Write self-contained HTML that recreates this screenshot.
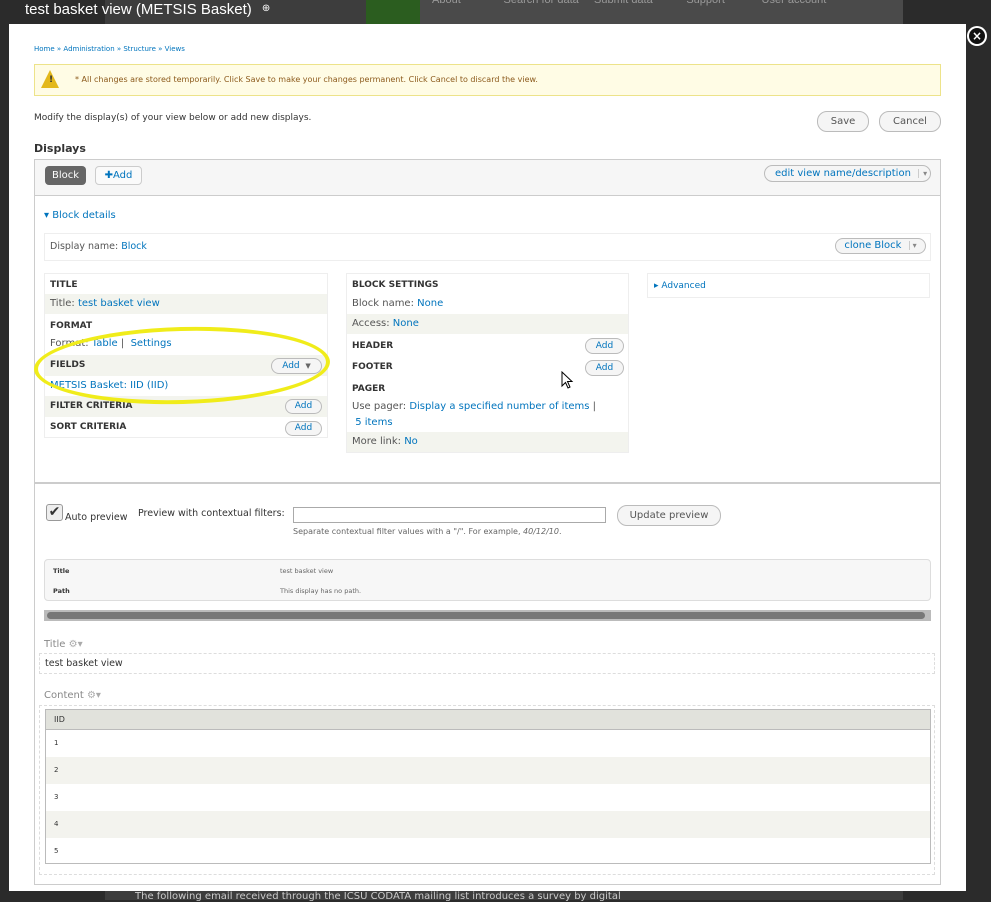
<!DOCTYPE html>
<html><head><style>
*{margin:0;padding:0;box-sizing:border-box}
body{width:991px;height:900px;background:#2b2b2b;position:relative;overflow:hidden;font-family:"DejaVu Sans","Liberation Sans",sans-serif;font-size:10px;color:#333}
.a{position:absolute}
a,.l{color:#0074bd;text-decoration:none}
.btn{position:absolute;border:1px solid #bbb;border-radius:10px;background:#f5f5f5;color:#0074bd;font-size:9px;text-align:center}
.hd{font-size:9px;font-weight:bold;color:#333}
.row{position:absolute;left:0;right:0;padding-left:5px}
.g{background:#f3f4ee}
</style></head><body>
<div class="a" style="left:105px;top:0;width:798px;height:900px;background:#3d3d3d"></div>
<div class="a" style="left:366px;top:0;width:537px;height:24px;background:#4a4a4a"></div>
<div class="a" style="left:366px;top:0;width:54px;height:24px;background:#2b5d1f"></div>
<div class="a" style="left:432px;top:-6px;color:#999;font-size:11px;font-family:'Liberation Sans',sans-serif">About &nbsp;&nbsp;&nbsp;&nbsp;&nbsp;&nbsp;&nbsp;&nbsp;&nbsp;&nbsp;&nbsp;&nbsp; Search for data &nbsp;&nbsp;&nbsp; Submit data &nbsp;&nbsp;&nbsp;&nbsp;&nbsp;&nbsp;&nbsp;&nbsp;&nbsp; Support &nbsp;&nbsp;&nbsp;&nbsp;&nbsp;&nbsp;&nbsp;&nbsp;&nbsp;&nbsp; User account</div>
<div class="a" style="left:25px;top:1px;color:#fff;font-size:15px;font-family:'Liberation Sans',sans-serif">test basket view (METSIS Basket) <span style="font-size:10px;position:relative;top:-3px;margin-left:6px">⊕</span></div>
<div class="a" style="left:9px;top:24px;width:957px;height:867px;background:#fff"></div>
<div class="a" style="left:967px;top:26px;width:20px;height:20px;border-radius:50%;background:#fff;text-align:center"><div style="margin:2px;width:16px;height:16px;border-radius:50%;background:#111;color:#fff;font-size:12px;line-height:16px;font-weight:bold">×</div></div>
<div class="a l" style="left:34px;top:45px;font-size:7px">Home » Administration » Structure » Views</div>
<div class="a" style="left:34px;top:64px;width:907px;height:32px;background:#fffce5;border:1px solid #ede38a"></div>
<div class="a" style="left:41px;top:70px;width:0;height:0;border-left:9px solid transparent;border-right:9px solid transparent;border-bottom:18px solid #e3b81c"></div>
<div class="a" style="left:49px;top:75px;font-size:9px;font-weight:bold">!</div>
<div class="a" style="left:75px;top:75px;font-size:8px;color:#8c5a1c">* All changes are stored temporarily. Click Save to make your changes permanent. Click Cancel to discard the view.</div>
<div class="a" style="left:34px;top:113px;font-size:9px">Modify the display(s) of your view below or add new displays.</div>
<div class="btn" style="left:817px;top:111px;width:52px;height:21px;color:#555;line-height:19px;font-size:10px">Save</div>
<div class="btn" style="left:879px;top:111px;width:62px;height:21px;color:#555;line-height:19px;font-size:10px">Cancel</div>
<div class="a" style="left:34px;top:142px;font-size:11px;font-weight:bold">Displays</div>
<div class="a" style="left:34px;top:159px;width:907px;height:726px;border:1px solid #ccc"></div>
<div class="a" style="left:35px;top:160px;width:905px;height:36px;background:#f6f6f6;border-bottom:1px solid #ccc"></div>
<div class="a" style="left:45px;top:166px;width:41px;height:19px;background:#666;color:#fff;border-radius:4px;text-align:center;line-height:19px;font-size:10px">Block</div>
<div class="a" style="left:95px;top:166px;width:47px;height:19px;border:1px solid #ccc;border-radius:4px;background:#fafafa;color:#0074bd;text-align:center;line-height:17px;font-size:10px">✚Add</div>
<div class="btn" style="left:764px;top:165px;width:167px;height:17px;line-height:15px;font-size:10px;text-align:left;padding-left:10px">edit view name/description <span style="color:#888;border-left:1px solid #ccc;padding-left:4px;margin-left:4px;font-size:8px">▾</span></div>
<div class="a l" style="left:44px;top:210px;font-size:10px">▾ Block details</div>
<div class="a" style="left:44px;top:233px;width:887px;height:28px;border:1px solid #eee"></div>
<div class="a" style="left:50px;top:241px;font-size:9.5px;color:#555">Display name: <a>Block</a></div>
<div class="btn" style="left:835px;top:238px;width:91px;height:16px;line-height:14px;font-size:10px">clone Block <span style="color:#888;border-left:1px solid #ccc;padding-left:3px;margin-left:4px;font-size:8px">▾</span></div>
<div class="a" style="left:44px;top:273px;width:284px;height:165px;border:1px solid #eee">
 <div class="row hd" style="top:6px">TITLE</div>
 <div class="row g" style="top:20px;height:20px;line-height:20px;color:#555">Title: <a>test basket view</a></div>
 <div class="row hd" style="top:47px">FORMAT</div>
 <div class="row" style="top:60px;height:20px;line-height:20px;color:#555">Format: <a>Table</a> | &nbsp;<a>Settings</a></div>
 <div class="row hd g" style="top:81px;height:21px;line-height:21px">FIELDS</div>
 <div class="btn" style="left:226px;top:84px;width:51px;height:16px;line-height:14px">Add &nbsp;<span style="color:#666;font-size:7px">▼</span></div>
 <div class="row" style="top:102px;height:20px;line-height:20px"><a>METSIS Basket: IID (IID)</a></div>
 <div class="row hd g" style="top:122px;height:21px;line-height:21px">FILTER CRITERIA</div>
 <div class="btn" style="left:240px;top:125px;width:37px;height:15px;line-height:13px">Add</div>
 <div class="row hd" style="top:143px;height:21px;line-height:21px">SORT CRITERIA</div>
 <div class="btn" style="left:240px;top:147px;width:37px;height:15px;line-height:13px">Add</div>
</div>
<div class="a" style="left:346px;top:273px;width:283px;height:180px;border:1px solid #eee">
 <div class="row hd" style="top:6px">BLOCK SETTINGS</div>
 <div class="row" style="top:20px;height:20px;line-height:20px;color:#555">Block name: <a>None</a></div>
 <div class="row g" style="top:40px;height:20px;line-height:20px;color:#555">Access: <a>None</a></div>
 <div class="row hd" style="top:62px;height:20px;line-height:20px">HEADER</div>
 <div class="btn" style="left:238px;top:64px;width:39px;height:16px;line-height:14px">Add</div>
 <div class="row hd" style="top:83px;height:20px;line-height:20px">FOOTER</div>
 <div class="btn" style="left:238px;top:86px;width:39px;height:16px;line-height:14px">Add</div>
 <div class="row hd" style="top:105px;height:20px;line-height:20px">PAGER</div>
 <div class="row" style="top:127px;color:#555">Use pager: <a>Display a specified number of items</a> |</div>
 <div class="row" style="top:143px;color:#555">&nbsp;<a>5 items</a></div>
 <div class="row g" style="top:158px;height:20px;line-height:20px;color:#555">More link: <a>No</a></div>
</div>
<div class="a" style="left:647px;top:273px;width:283px;height:25px;border:1px solid #eee;line-height:24px;padding-left:6px;font-size:9px" ><a>▸ Advanced</a></div>
<div class="a" style="left:34px;top:327px;width:296px;height:77px;border:4px solid #f0ec1a;border-radius:50%;transform:rotate(-1.5deg)"></div>
<svg class="a" style="left:561px;top:371px" width="14" height="20"><path d="M1 1 L1 15 L4.5 11.5 L7 17 L9 16 L6.5 10.5 L11 10.5 Z" fill="#fff" stroke="#000"/></svg>
<div class="a" style="left:35px;top:482px;width:905px;height:2px;background:#ccc"></div>
<div class="a" style="left:46px;top:504px;width:17px;height:17px;border:1px solid #999;border-radius:3px;background:#eee;font-size:14px;line-height:15px;text-align:center">✔</div>
<div class="a" style="left:65px;top:512px;font-size:9.5px">Auto preview</div>
<div class="a" style="left:138px;top:508px;font-size:9.5px">Preview with contextual filters:</div>
<div class="a" style="left:293px;top:507px;width:313px;height:16px;border:1px solid #aaa"></div>
<div class="a" style="left:293px;top:527px;font-size:8px;color:#666">Separate contextual filter values with a "/". For example, <i>40/12/10</i>.</div>
<div class="btn" style="left:617px;top:505px;width:104px;height:21px;line-height:19px;color:#555;font-size:10px">Update preview</div>
<div class="a" style="left:44px;top:559px;width:887px;height:42px;border:1px solid #ddd;border-radius:4px;background:#f7f7f7"></div>
<div class="a" style="left:53px;top:567px;font-size:6.5px;font-weight:bold">Title</div>
<div class="a" style="left:280px;top:567px;font-size:6.5px;color:#666">test basket view</div>
<div class="a" style="left:53px;top:587px;font-size:6.5px;font-weight:bold">Path</div>
<div class="a" style="left:280px;top:587px;font-size:6.5px;color:#666">This display has no path.</div>
<div class="a" style="left:44px;top:610px;width:887px;height:11px;background:#bbb"></div>
<div class="a" style="left:47px;top:612px;width:878px;height:7px;background:#777;border-radius:4px"></div>
<div class="a" style="left:44px;top:639px;font-size:10px;color:#888">Title <span style="color:#aaa">⚙▾</span></div>
<div class="a" style="left:39px;top:653px;width:896px;height:21px;border:1px dashed #ddd;padding-left:5px;line-height:20px;font-size:9.5px">test basket view</div>
<div class="a" style="left:44px;top:690px;font-size:10px;color:#888">Content <span style="color:#aaa">⚙▾</span></div>
<div class="a" style="left:39px;top:705px;width:896px;height:170px;border:1px dashed #ddd"></div>
<div class="a" style="left:45px;top:709px;width:886px;height:155px;border:1px solid #bbb">
 <div style="height:20px;background:#e1e2dc;border-bottom:1px solid #bbb;line-height:19px;padding-left:8px;font-size:8px">IID</div>
 <div style="height:27px;line-height:27px;padding-left:8px;font-size:7px">1</div>
 <div style="height:27px;line-height:27px;padding-left:8px;font-size:7px;background:#f3f3ee">2</div>
 <div style="height:27px;line-height:27px;padding-left:8px;font-size:7px">3</div>
 <div style="height:27px;line-height:27px;padding-left:8px;font-size:7px;background:#f3f3ee">4</div>
 <div style="height:26px;line-height:26px;padding-left:8px;font-size:7px">5</div>
</div>
<div class="a" style="left:135px;top:891px;color:#ccc;font-size:10px">The following email received through the ICSU CODATA mailing list introduces a survey by digital</div>
</body></html>
